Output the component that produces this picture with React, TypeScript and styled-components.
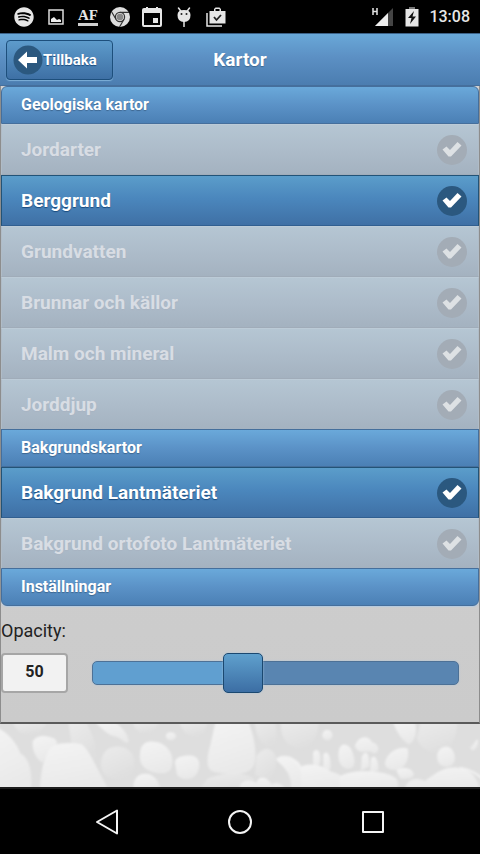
import React, { useState } from "react";
import styled, { createGlobalStyle, css } from "styled-components";
import { FaSpotify } from "react-icons/fa";

const GlobalStyle = createGlobalStyle`
  *, *::before, *::after { box-sizing: border-box; }
  body {
    margin: 0;
    background: #000;
    font-family: Roboto, "Noto Sans", sans-serif;
    color: #222;
  }
`;

const Screen = styled.div`
  display: flex;
  flex-direction: column;
  min-height: 100vh;
`;

const StatusBar = styled.div`
  display: flex;
  justify-content: space-between;
  align-items: center;
  height: 33px;
  padding: 0 10px 0 14px;
  background: #000;
  color: #e6e6e6;
`;

const StatusGroup = styled.div<{ $gap: number }>`
  display: flex;
  align-items: center;
  gap: ${(p) => p.$gap}px;
`;

const StatusIcon = styled.svg`
  display: block;
  width: 20px;
  height: 20px;
`;

const AppBadge = styled.span`
  width: 20px;
  border-bottom: 3px solid #d0d0d0;
  font: bold 15px/16px "Liberation Serif", serif;
  text-align: center;
  white-space: nowrap;
`;

const Clock = styled.time`
  font-size: 16px;
  font-weight: 500;
  line-height: 20px;
`;

const Header = styled.header`
  display: grid;
  grid-template-columns: 1fr auto 1fr;
  align-items: center;
  height: 53px;
  padding: 0 6px;
  border-top: 1px solid #3c6288;
  border-bottom: 1px solid #456f9c;
  background: linear-gradient(#69a8d8, #5c90c4 45%, #4b7db0);
  color: #fff;
`;

const Title = styled.h1`
  margin: 0;
  font-size: 19px;
  line-height: 24px;
  font-weight: 700;
  text-shadow: 0 1px 1px #3e6790;
`;

const BackButton = styled.button`
  display: flex;
  align-items: center;
  justify-self: start;
  height: 40px;
  padding: 0 15px 0 6px;
  border: 1px solid #1d4f7c;
  border-radius: 4px;
  background: linear-gradient(#5d9bcb, #3e70a5);
  box-shadow: 0 1px 1px #7fb0d8;
  color: #fff;
  font: 700 15px/20px Roboto, sans-serif;
  text-shadow: 0 1px 1px #194b7e;
`;

const BackIcon = styled.svg`
  width: 30px;
  height: 30px;
`;

const Panel = styled.main`
  border: solid #8d8d8d;
  border-width: 0 1px;
  border-bottom: 2px solid #5a5a5a;
  background: linear-gradient(#d2d2d2, #cbcbcb);
`;

const Section = styled.section`
  & + & {
    margin-top: -1px;
  }
`;

const SectionTitle = styled.h2<{ $edge?: "top" | "bottom" }>`
  margin: 0;
  height: 38px;
  padding: 0 19px;
  border: 1px solid #456f9c;
  background: linear-gradient(#6aa9da, #5b92c7 50%, #4b80b5);
  color: #fff;
  font-size: 16px;
  line-height: 36px;
  font-weight: 700;
  text-shadow: 0 1px 1px #3e6790;
  ${(p) => p.$edge === "top" && css`border-radius: 6px 6px 0 0;`}
  ${(p) => p.$edge === "bottom" && css`
    border-radius: 0 0 6px 6px;
    box-shadow: 0 1px 1px #b5cbe0;
  `}
`;

const LayerRow = styled.label<{ $on: boolean }>`
  display: flex;
  align-items: center;
  justify-content: space-between;
  height: 51px;
  padding: 0 11px 0 19px;
  border: 1px solid;
  font-size: 19px;
  line-height: 24px;
  font-weight: 700;
  ${(p) => p.$on
    ? css`
        border-color: #225377 #225377 #315f90;
        background: linear-gradient(#5b9dca, #4b87bd 45%, #3f70a5);
        color: #fff;
        text-shadow: 0 1px 1px #194b7e;
      `
    : css`
        border-color: #bccbd7 #b0bcc7 #a0acb9;
        background: linear-gradient(#b5c6d3, #adbcca 50%, #a4b2c0);
        color: #d8dde4;
        text-shadow: 0 1px 1px #a8b4c2;
      `}
`;

const CheckSlot = styled.span`
  display: grid;
  width: 30px;
  height: 30px;
  & > * {
    grid-area: 1 / 1;
  }
`;

const CheckInput = styled.input`
  appearance: none;
  margin: 0;
  border-radius: 50%;
  background: #a3acb6;
  &:checked {
    background: #2b587f;
  }
`;

const CheckMark = styled.svg<{ $on: boolean }>`
  width: 30px;
  height: 30px;
  pointer-events: none;
  fill: ${(p) => (p.$on ? "#fff" : "#dde1e4")};
`;

const SettingBlock = styled.div`
  padding: 13px 0 29px;
`;

const SettingLabel = styled.label`
  display: block;
  margin-bottom: 10px;
  font-size: 18px;
  line-height: 24px;
`;

const SliderRow = styled.div`
  display: flex;
  align-items: center;
  gap: 24px;
  padding-right: 20px;
`;

const ValueInput = styled.input`
  width: 67px;
  height: 40px;
  padding: 0 0 3px;
  border: 2px solid #a6a6a6;
  border-radius: 4px;
  background: #f2f2f2;
  color: #222;
  font: 700 16px/20px Roboto, sans-serif;
  text-align: center;
`;

const Slider = styled.input`
  appearance: none;
  flex: 1;
  min-width: 0;
  height: 40px;
  margin: 0;
  background: transparent;

  &::-webkit-slider-runnable-track {
    height: 24px;
    border: 1px solid #4d7196;
    border-radius: 5px;
    background: linear-gradient(
      to right,
      #609fd0 var(--fill),
      #5985b1 var(--fill)
    );
    box-shadow: 0 0 2px #a9c4dc;
  }
  &::-webkit-slider-thumb {
    appearance: none;
    width: 40px;
    height: 40px;
    margin-top: -9px;
    border: 1px solid #1b4870;
    border-radius: 5px;
    background: linear-gradient(#5fa0cd, #3c6ea4);
    box-shadow: 0 0 2px #a9c4dc;
  }
`;

const Pebbles = styled.svg`
  display: block;
  flex: 1 1 62px;
  width: 100%;
  height: 62px;
  background: #dedede;
`;

const NavBar = styled.nav`
  display: flex;
  justify-content: center;
  align-items: center;
  gap: 101px;
  height: 67px;
  border-top: 2px solid #1c1c1c;
  background: #000;
`;

const NavButton = styled.button`
  display: block;
  width: 32px;
  height: 32px;
  padding: 0;
  border: 0;
  background: none;
  & > svg {
    display: block;
    fill: none;
    stroke: #f4f4f4;
    stroke-width: 2px;
    stroke-linejoin: round;
  }
`;

const geology = ["Jordarter", "Berggrund", "Grundvatten", "Brunnar och källor", "Malm och mineral", "Jorddjup"];
const backgrounds = ["Bakgrund Lantmäteriet", "Bakgrund ortofoto Lantmäteriet"];
const maxOpacity = 125;

function Layer({ name, on, onToggle }: { name: string; on: boolean; onToggle: () => void }) {
  return (
    <LayerRow $on={on}>
      {name}
      <CheckSlot>
        <CheckInput type="checkbox" checked={on} onChange={onToggle} />
        <CheckMark $on={on} viewBox="0 0 30 30" aria-hidden="true">
          <path d="M5.500 14.500l4-3 3.500 3.500L20.500 7l4 3.500L14 21.500h-2.500z" />
        </CheckMark>
      </CheckSlot>
    </LayerRow>
  );
}

function Stones() {
  return (
    <Pebbles viewBox="0 0 480 62" preserveAspectRatio="xMidYMid slice" aria-hidden="true">
      <defs>
        <linearGradient id="stone" x1="0" y1="0" x2="0.3" y2="1">
          <stop offset="0" stopColor="#f4f4f4" />
          <stop offset="1" stopColor="#e9e9e9" />
        </linearGradient>
        <linearGradient id="shade" x1="0" y1="0" x2="0.5" y2="1">
          <stop offset="0" stopColor="#ebebeb" />
          <stop offset="1" stopColor="#dfdfdf" />
        </linearGradient>
        <filter id="soft">
          <feGaussianBlur stdDeviation="0.8" />
        </filter>
      </defs>
      <g filter="url(#soft)">
        <g fill="url(#shade)">
          <path d="M16 -3H50C48 6 40 10 31 10C24 10 19 6 16 -3Z" />
          <path d="M71 -3H88C93 8 99 16 98 32C97 40 92 38 88 30L74 18Z" />
          <path d="M104 34C106 24 116 20 125 23C135 26 138 36 135 46C130 54 118 56 110 52C104 48 102 42 104 34Z" />
          <path d="M134 -3H160C158 6 152 9 146 9C140 9 136 5 134 -3Z" />
          <path d="M180 -3H208C207 8 202 12 196 12C188 12 183 7 180 -3Z" />
          <path d="M254 -3H274C278 10 277 20 270 22C261 22 256 12 254 -3Z" />
          <path d="M280 -3H318C316 14 310 22 300 24C288 22 280 18 280 -3Z" />
          <path d="M256 32C262 22 272 22 275 32C277 44 273 52 266 56L255 50Z" />
          <path d="M418 -3H454C454 12 448 24 438 28C426 30 416 22 414 14Z" />
          <path d="M208 54C220 48 244 46 254 54V65H200Z" />
        </g>
        <g fill="url(#stone)">
          <path d="M-3 2C10 6 20 18 24 29C33 34 36 48 34 65H-3Z" />
          <path d="M36 17C40 10 50 11 57 14C62 18 60 20 56 21C52 26 48 32 46 38C40 36 35 26 36 17Z" />
          <path d="M43 65C44 44 48 28 56 21C64 18 76 18 84 20C92 26 98 42 111 65Z" />
          <path d="M96 -3C102 2 108 10 116 12C124 14 128 20 130 18C131 10 124 4 116 -3Z" />
          <path d="M142 26C144 16 154 16 162 19C172 24 176 34 172 44C168 52 150 48 145 42C141 38 141 32 142 26Z" />
          <ellipse cx="172" cy="12" rx="5" ry="4" />
          <path d="M176 38C176 32 184 31 192 31C200 32 202 40 198 48C194 56 182 56 178 50Z" />
          <path d="M216 -3H248C254 12 257 28 254 40C248 52 230 50 214 47C205 44 208 30 211 20Z" />
          <path d="M135 65C134 52 142 48 148 49C156 50 160 56 162 65Z" />
          <path d="M240 60C244 54 252 55 256 58C258 50 268 52 271 60C276 56 284 60 285 65H240Z" />
          <path d="M276 36C282 28 292 32 298 38C304 46 304 56 301 65H290C292 52 284 42 276 36Z" />
          <path d="M312 28C316 22 320 28 319 36C318 44 314 46 312 42Z" />
          <path d="M322 30C326 24 330 32 329 44L322 48Z" />
          <path d="M337 28C338 18 346 18 350 26C354 36 354 43 347 44C339 44 336 36 337 28Z" />
          <ellipse cx="326" cy="11" rx="5" ry="5" />
          <path d="M353 22C356 12 366 10 370 18C378 20 378 28 372 29C364 24 358 32 353 22Z" />
          <path d="M360 32C364 24 368 30 367 42L359 46Z" />
          <path d="M369 34C373 28 377 38 376 46L368 48Z" />
          <path d="M384 34C388 26 398 22 405 24C407 32 404 42 396 45C386 46 380 42 384 34Z" />
          <path d="M390 -3H412C415 8 412 18 406 20C400 16 396 12 390 -3Z" />
          <path d="M434 32C434 24 442 20 448 24C454 32 452 41 444 42C437 42 434 38 434 32Z" />
          <path d="M300 65V42C308 38 320 40 330 47C342 50 346 56 346 65Z" />
          <path d="M338 52C346 45 382 44 394 54C396 58 396 62 394 65H338Z" />
          <path d="M394 46C398 42 410 42 411 50C410 54 404 54 398 54Z" />
          <path d="M402 65C404 54 412 52 422 56C434 48 440 42 454 43C466 44 474 52 476 65Z" />
          <path d="M466 24C470 20 472 16 474 15C475 20 473 24 470 26Z" />
        </g>
        <g fill="none" stroke="#f2f2f2" strokeWidth="2">
          <path d="M456 43C466 44 476 50 482 58" />
          <path d="M276 35C284 28 298 36 301 48" />
        </g>
      </g>
    </Pebbles>
  );
}

function StatusIcons() {
  return (
    <StatusGroup $gap={12}>
      <FaSpotify size={20} aria-label="Spotify" />
      <StatusIcon viewBox="0 0 20 20" aria-hidden="true">
        <rect x="3" y="3" width="14" height="14" fill="none" stroke="#ddd" strokeWidth="1.500" />
        <path d="M5 15v-3l3-2 3 3 2-1 2 1v2z" fill="#eee" />
      </StatusIcon>
      <AppBadge>AF</AppBadge>
      <StatusIcon viewBox="0 0 20 20" aria-hidden="true">
        <circle cx="10" cy="10" r="10" fill="#ddd" />
        <g fill="none" stroke="#333" strokeWidth="1.200">
          <circle cx="10" cy="10" r="4.600" />
          <path d="M10 5.400h9M6 12.300L1.700 5M14 12.300L9.500 20" />
        </g>
        <circle cx="10" cy="10" r="3.300" fill="#888" />
      </StatusIcon>
      <StatusIcon viewBox="0 0 20 20" aria-hidden="true">
        <rect x="1" y="2" width="18" height="17" rx="1" fill="none" stroke="#e6e6e6" strokeWidth="2" />
        <path d="M1 2h18v4H1zM4 0h2v3H4zM14 0h2v3h-2zM11 11h5v5h-5z" fill="#e6e6e6" />
      </StatusIcon>
      <StatusIcon viewBox="0 0 20 20" aria-hidden="true">
        <path d="M4.500 1l3 4M15.500 1l-3 4M10 14v5.500" stroke="#e6e6e6" strokeWidth="1.500" strokeLinecap="round" />
        <path d="M3.500 8q0-5 6.500-5t6.500 5q0 7-6.500 7T3.500 8z" fill="#e6e6e6" />
        <circle cx="7.500" cy="7" r="1" fill="#222" />
        <circle cx="12.500" cy="7" r="1" fill="#222" />
      </StatusIcon>
      <StatusIcon viewBox="0 0 20 20" aria-hidden="true">
        <path d="M1 6v13h15" fill="none" stroke="#e6e6e6" strokeWidth="1.500" />
        <path d="M3.500 4H8V2l1.500-1.500h4L15 2v2h4.500v12.500h-16z" fill="#e6e6e6" />
        <path d="M9.500 2h4v2h-4z" fill="#000" />
        <path d="M8 10l2.500 3 4.500-5" fill="none" stroke="#222" strokeWidth="1.800" />
      </StatusIcon>
    </StatusGroup>
  );
}

export default function App() {
  const [active, setActive] = useState<string[]>(["Berggrund", "Bakgrund Lantmäteriet"]);
  const [opacity, setOpacity] = useState(50);
  const toggle = (name: string) =>
    setActive((list) => (list.includes(name) ? list.filter((n) => n !== name) : [...list, name]));
  const layers = (names: string[]) =>
    names.map((name) => (
      <Layer key={name} name={name} on={active.includes(name)} onToggle={() => toggle(name)} />
    ));

  return (
    <Screen>
      <GlobalStyle />
      <StatusBar>
        <StatusIcons />
        <StatusGroup $gap={10}>
          <svg width="24" height="20" viewBox="0 0 24 20" aria-hidden="true">
            <path d="M2 1v7M6 1v7M2 4.500h4" stroke="#e6e6e6" strokeWidth="1.500" />
            <path d="M22 1v18H4z" fill="#444" />
            <path d="M17 6v13H4z" fill="#eee" />
          </svg>
          <svg width="14" height="20" viewBox="0 0 14 20" aria-hidden="true">
            <path d="M4 0h6v2H4z" fill="#777" />
            <path d="M.5 2h13v17.500H.5z" fill="#e6e6e6" />
            <path d="M9 4l-6 7h3.500L5 17l6-7.500H7.500z" fill="#111" />
          </svg>
          <Clock>13:08</Clock>
        </StatusGroup>
      </StatusBar>
      <Header>
        <BackButton type="button">
          <BackIcon viewBox="0 0 30 30" aria-hidden="true">
            <circle cx="15" cy="15" r="14.500" fill="#2b587f" />
            <path d="M5 15l9-8.500v5.500h10v6H14v5.500z" fill="#fff" />
          </BackIcon>
          Tillbaka
        </BackButton>
        <Title>Kartor</Title>
      </Header>
      <Panel>
        <Section>
          <SectionTitle $edge="top">Geologiska kartor</SectionTitle>
          {layers(geology)}
        </Section>
        <Section>
          <SectionTitle>Bakgrundskartor</SectionTitle>
          {layers(backgrounds)}
        </Section>
        <Section>
          <SectionTitle $edge="bottom">Inställningar</SectionTitle>
          <SettingBlock>
            <SettingLabel htmlFor="opacity">Opacity:</SettingLabel>
            <SliderRow>
              <ValueInput
                id="opacity"
                inputMode="numeric"
                value={opacity}
                onChange={(e) => setOpacity(Math.min(maxOpacity, Number(e.target.value) || 0))}
              />
              <Slider
                type="range"
                aria-label="Opacity"
                min={0}
                max={maxOpacity}
                value={opacity}
                onChange={(e) => setOpacity(Number(e.target.value))}
                style={{ "--fill": `${(opacity / maxOpacity) * 100}%` } as React.CSSProperties}
              />
            </SliderRow>
          </SettingBlock>
        </Section>
      </Panel>
      <Stones />
      <NavBar aria-label="System">
        <NavButton type="button" aria-label="Back">
          <svg width="32" height="32" viewBox="0 0 32 32"><path d="M6 16L26 4.500v23z" /></svg>
        </NavButton>
        <NavButton type="button" aria-label="Home">
          <svg width="32" height="32" viewBox="0 0 32 32"><circle cx="16" cy="16" r="11" /></svg>
        </NavButton>
        <NavButton type="button" aria-label="Recent apps">
          <svg width="32" height="32" viewBox="0 0 32 32"><rect x="6" y="6" width="20" height="20" /></svg>
        </NavButton>
      </NavBar>
    </Screen>
  );
}
